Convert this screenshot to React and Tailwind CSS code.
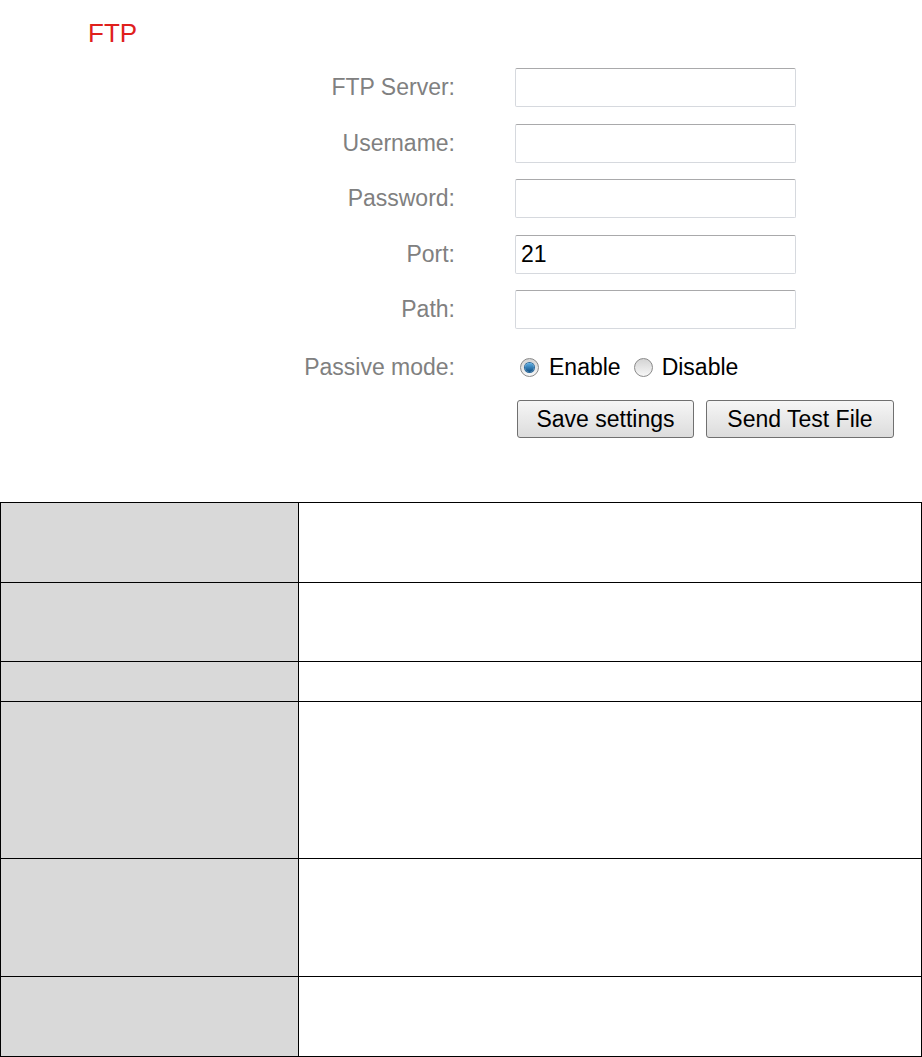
import React from 'react';

const fields = [
  { label: 'FTP Server:', value: '' },
  { label: 'Username:', value: '' },
  { label: 'Password:', value: '' },
  { label: 'Port:', value: '21' },
  { label: 'Path:', value: '' },
];

// Row heights of the description table (border-b included)
const tableRows = [80, 79, 40, 157, 118, 80];

const Radio = ({ checked }) => (
  <span className="relative inline-flex h-[19px] w-[19px] items-center justify-center rounded-full border border-[#8a8a8a] bg-gradient-to-b from-[#d4d4d4] to-[#f7f7f7]">
    {checked && (
      <span className="h-[9px] w-[9px] rounded-full bg-gradient-to-b from-[#5bb0e6] to-[#0e4f86] shadow-[0_0_0_1px_#2c6a9c]" />
    )}
  </span>
);

const App = () => {
  return (
    <div className="min-h-[1057px] bg-white font-['Liberation_Sans',Arial,sans-serif]">
      <div className="pl-[88px] pt-[18px] text-[26px] leading-[30px] text-[#e0201c]">FTP</div>

      <div className="mt-[20px] grid grid-cols-[455px_281px] gap-x-[60px]">
        {fields.map((f, i) => (
          <React.Fragment key={f.label}>
            <div
              className={`flex items-center justify-end text-[23px] text-[#808080] ${i > 0 ? 'mt-[16.5px]' : ''}`}
            >
              {f.label}
            </div>
            <div className={i > 0 ? 'mt-[16.5px]' : ''}>
              <input
                type="text"
                defaultValue={f.value}
                className="block h-[39px] w-[281px] rounded-[2px] border border-[#d6d9de] border-t-[#a9a9ab] bg-white px-[5px] text-[23px] text-black outline-none"
              />
            </div>
          </React.Fragment>
        ))}

        <div className="mt-[28px] flex h-[20px] items-center justify-end text-[23px] text-[#808080]">
          Passive mode:
        </div>
        <div className="mt-[28px] flex h-[20px] items-center text-[23px] text-black">
          <span className="ml-[5px] flex items-center">
            <Radio checked />
          </span>
          <span className="ml-[10px]">Enable</span>
          <span className="ml-[13px] flex items-center">
            <Radio />
          </span>
          <span className="ml-[9px]">Disable</span>
        </div>

        <div />
        <div className="mt-[23px] flex gap-[12px] pl-[2px]">
          <button className="h-[38px] w-[177px] shrink-0 rounded-[3px] border border-[#707070] bg-gradient-to-b from-[#f6f6f6] to-[#dcdcdc] text-[23px] text-black">
            Save settings
          </button>
          <button className="h-[38px] w-[188px] shrink-0 rounded-[3px] border border-[#707070] bg-gradient-to-b from-[#f6f6f6] to-[#dcdcdc] text-[23px] text-black">
            Send Test File
          </button>
        </div>
      </div>

      <div className="mt-[64px] w-[922px] border-l border-t border-black">
        {tableRows.map((h, i) => (
          <div key={i} className="flex border-b border-black" style={{ height: h }}>
            <div className="w-[298px] border-r border-black bg-[#d9d9d9]" />
            <div className="w-[623px] border-r border-black bg-white" />
          </div>
        ))}
      </div>
    </div>
  );
};

export default App;
